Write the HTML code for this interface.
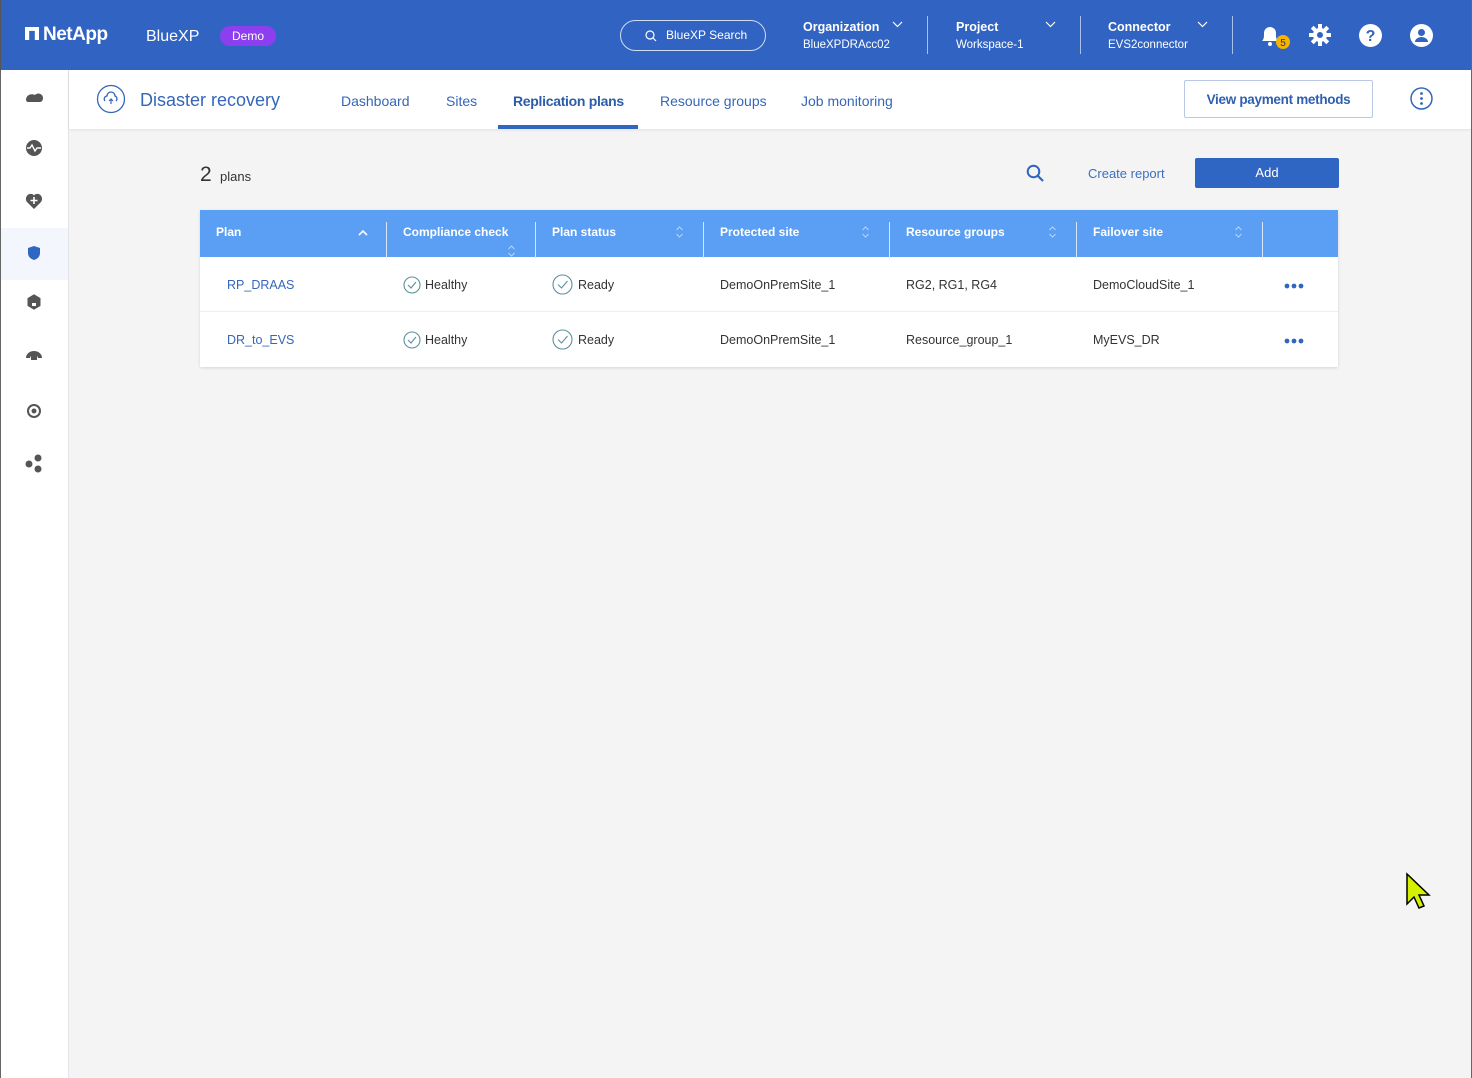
<!DOCTYPE html>
<html><head><meta charset="utf-8"><style>
*{box-sizing:border-box;margin:0;padding:0}
body{width:1472px;height:1078px;overflow:hidden;background:#f4f4f5;font-family:"Liberation Sans",sans-serif;position:relative;color:#333}
.a{position:absolute}
.top{left:0;top:0;width:1472px;height:70px;background:#3163c2;border-left:1px solid #555;border-right:1px solid #555}
.w{color:#fff}
.side{left:0;top:70px;width:69px;height:1008px;background:#fff;border-left:1px solid #666;border-right:1px solid #e4e4e8}
.sub{left:69px;top:70px;width:1403px;height:59px;background:#fff;box-shadow:0 1px 3px rgba(0,0,0,.08)}
.nav{top:93px;font-size:14px;color:#3566b9}
.th{top:210px;height:47px;background:#5a9ff4;left:200px;width:1138px}
.thc{top:225px;font-size:12px;font-weight:bold;color:#fff}
.sep{top:222px;width:1px;height:36px;background:#d6e6fb}
.td{font-size:12.5px;color:#333}
</style></head><body>
<div class="a top"></div>
<div class="a w" style="left:25px;top:24px;font-size:19px;font-weight:bold;letter-spacing:-0.5px"><span style="display:inline-block;width:14px;height:13px;background:#fff;margin-right:4px;vertical-align:0px;clip-path:polygon(0 0,100% 0,100% 100%,70% 100%,70% 30%,30% 30%,30% 100%,0 100%)"></span>NetApp</div>
<div class="a w" style="left:146px;top:28px;font-size:16px">BlueXP</div>
<div class="a" style="left:220px;top:26px;width:56px;height:20px;background:#8d3ff0;border-radius:10px;color:#fff;font-size:12px;text-align:center;line-height:20px">Demo</div>
<div class="a" style="left:620px;top:20px;width:146px;height:31px;border:1px solid #d0dcf2;border-radius:16px;color:#fff;font-size:12px;line-height:29px;padding-left:25px"><svg class="a" style="left:24px;top:9px" width="12" height="12" viewBox="0 0 12 12"><circle cx="5" cy="5" r="4" stroke="#fff" fill="none" stroke-width="1.2"/><path d="M8 8l3 3" stroke="#fff" stroke-width="1.2"/></svg><span style="margin-left:20px">BlueXP Search</span></div>
<div class="a w" style="left:803px;top:20px;font-size:12.5px;font-weight:bold">Organization</div>
<div class="a w" style="left:803px;top:39px;font-size:11.5px">BlueXPDRAcc02</div>
<svg class="a" style="left:892px;top:21px" width="11" height="7"><path d="M1 1l4.5 4.5L10 1" stroke="#fff" fill="none" stroke-width="1.2"/></svg>
<div class="a" style="left:927px;top:16px;width:1px;height:38px;background:#aac0ea"></div>
<div class="a w" style="left:956px;top:20px;font-size:12.5px;font-weight:bold">Project</div>
<div class="a w" style="left:956px;top:39px;font-size:11.5px">Workspace-1</div>
<svg class="a" style="left:1045px;top:21px" width="11" height="7"><path d="M1 1l4.5 4.5L10 1" stroke="#fff" fill="none" stroke-width="1.2"/></svg>
<div class="a" style="left:1080px;top:16px;width:1px;height:38px;background:#aac0ea"></div>
<div class="a w" style="left:1108px;top:20px;font-size:12.5px;font-weight:bold">Connector</div>
<div class="a w" style="left:1108px;top:39px;font-size:11.5px">EVS2connector</div>
<svg class="a" style="left:1197px;top:21px" width="11" height="7"><path d="M1 1l4.5 4.5L10 1" stroke="#fff" fill="none" stroke-width="1.2"/></svg>
<div class="a" style="left:1232px;top:16px;width:1px;height:38px;background:#aac0ea"></div>
<svg class="a" style="left:1259px;top:23px" width="36" height="28" viewBox="0 0 36 28"><path d="M3 18c2-2 2-4 2-8a6 6 0 0 1 12 0c0 4 0 6 2 8z" fill="#fff"/><circle cx="11" cy="21" r="2" fill="#fff"/><circle cx="24" cy="19" r="7" fill="#f4b400"/><text x="24" y="23" font-size="10" text-anchor="middle" fill="#333" font-family="Liberation Sans">5</text></svg>
<svg class="a" style="left:1309px;top:24px" width="22" height="22" viewBox="0 0 22 22"><g fill="#fff"><circle cx="11" cy="11" r="7"/><rect x="9" y="0" width="4" height="22"/><rect x="0" y="9" width="22" height="4"/><rect x="9" y="0" width="4" height="22" transform="rotate(45 11 11)"/><rect x="9" y="0" width="4" height="22" transform="rotate(-45 11 11)"/></g><circle cx="11" cy="11" r="3" fill="#3163c2"/></svg>
<svg class="a" style="left:1359px;top:24px" width="23" height="23"><circle cx="11.5" cy="11.5" r="11.5" fill="#fff"/><text x="11.5" y="17" font-size="16" font-weight="bold" text-anchor="middle" fill="#3163c2" font-family="Liberation Sans">?</text></svg>
<svg class="a" style="left:1410px;top:24px" width="23" height="23"><circle cx="11.5" cy="11.5" r="11.5" fill="#fff"/><circle cx="11.5" cy="8.5" r="3.5" fill="#3163c2"/><path d="M5 18a6.5 5 0 0 1 13 0z" fill="#3163c2"/></svg>

<div class="a side"></div>
<div class="a" style="left:1px;top:228px;width:67px;height:52px;background:#f3f6fc"></div>
<svg class="a" style="left:24px;top:85px" width="20" height="400" viewBox="0 0 20 400" fill="#555">
<path d="M2 15c0-5 5-7 9-5 3-3 8-1 8 3 0 2-1 4-3 4H4c-1 0-2-1-2-2z"/>
<circle cx="10" cy="63" r="8"/><path d="M3 63h3l2-3 3 6 2-3h4" stroke="#fff" fill="none" stroke-width="1.4"/>
<path d="M10 124l-7-7c-3-4 1-9 4-8 2 0 3 1 3 2 0-1 1-2 3-2 3-1 7 4 4 8z"/><path d="M10 112v7M6.5 115.5h7" stroke="#fff" stroke-width="1.6"/>
<path d="M4 163l6-2 6 2v5c0 4-3 6-6 7-3-1-6-3-6-7z" fill="#2f66c3"/>
<path d="M5 214l5-3 5 3v6l-5 3-5-3z" stroke="#555" stroke-width="3"/><path d="M8 221v-3h4v3z" fill="#fff"/>
<path d="M2 273a8 7 0 0 1 16 0h-4a4 3 0 0 0-8 0z"/><rect x="7" y="270" width="6" height="5"/>
<circle cx="10" cy="326" r="6" fill="none" stroke="#555" stroke-width="2"/><circle cx="10" cy="326" r="2.5"/>
<circle cx="14" cy="373" r="3.5"/><circle cx="5" cy="379" r="3.5"/><circle cx="14" cy="384" r="3.5"/>
</svg>

<div class="a sub"></div>
<svg class="a" style="left:96px;top:84px" width="30" height="30"><circle cx="15" cy="15" r="13.5" fill="none" stroke="#3566b9" stroke-width="1.3"/><path d="M9 17a3 3 0 0 1 2-5 4 4 0 0 1 8 0 3 3 0 0 1 1 5" fill="none" stroke="#3566b9" stroke-width="1.3"/><path d="M15 20v-5M13 17l2-2 2 2" fill="none" stroke="#3566b9" stroke-width="1.2"/></svg>
<div class="a" style="left:140px;top:90px;font-size:18px;color:#3566b9">Disaster recovery</div>
<div class="a nav" style="left:341px">Dashboard</div>
<div class="a nav" style="left:446px">Sites</div>
<div class="a nav" style="left:513px;font-weight:bold;color:#2c5ca8;letter-spacing:-0.3px">Replication plans</div>
<div class="a" style="left:498px;top:125px;width:140px;height:4px;background:#2f66c3"></div>
<div class="a nav" style="left:660px">Resource groups</div>
<div class="a nav" style="left:801px">Job monitoring</div>
<div class="a" style="left:1184px;top:80px;width:189px;height:38px;border:1px solid #b8c8e6;border-radius:2px;font-size:13.5px;color:#2f5fb0;text-align:center;line-height:37px;font-weight:bold;letter-spacing:-0.3px">View payment methods</div>
<svg class="a" style="left:1410px;top:87px" width="23" height="23"><circle cx="11.5" cy="11.5" r="10.5" fill="none" stroke="#2f66c3" stroke-width="1.5"/><circle cx="11.5" cy="6.5" r="1.4" fill="#2f66c3"/><circle cx="11.5" cy="11.5" r="1.4" fill="#2f66c3"/><circle cx="11.5" cy="16.5" r="1.4" fill="#2f66c3"/></svg>

<div class="a" style="left:200px;top:163px;font-size:21px;color:#333">2</div>
<div class="a" style="left:220px;top:169px;font-size:13px;color:#333">plans</div>
<svg class="a" style="left:1026px;top:164px" width="19" height="19"><circle cx="7.5" cy="7.5" r="5.8" fill="none" stroke="#2f66c3" stroke-width="2"/><path d="M12 12l5 5" stroke="#2f66c3" stroke-width="2.2"/></svg>
<div class="a" style="left:1088px;top:166px;font-size:13px;color:#3d6fbd">Create report</div>
<div class="a" style="left:1195px;top:158px;width:144px;height:30px;background:#2f66c3;border-radius:2px;color:#fff;font-size:13px;text-align:center;line-height:30px">Add</div>

<div class="a" style="left:200px;top:210px;width:1138px;height:157px;background:#fff;box-shadow:0 1px 3px rgba(0,0,0,.12)"></div>
<div class="a th"></div>
<div class="a thc" style="left:216px">Plan</div>
<svg class="a" style="left:358px;top:229px" width="10" height="7"><path d="M1 6l4-4 4 4" stroke="#fff" fill="none" stroke-width="1.6"/></svg>
<div class="a sep" style="left:386px"></div>
<div class="a thc" style="left:403px">Compliance check</div>
<svg class="a" style="left:507px;top:244px" width="9" height="14"><path d="M1.5 5l3-3 3 3M1.5 9l3 3 3-3" stroke="#b9d5fb" fill="none" stroke-width="1"/></svg>
<div class="a sep" style="left:535px"></div>
<div class="a thc" style="left:552px">Plan status</div>
<div class="a sep" style="left:703px"></div>
<div class="a thc" style="left:720px">Protected site</div>
<div class="a sep" style="left:889px"></div>
<div class="a thc" style="left:906px">Resource groups</div>
<div class="a sep" style="left:1076px"></div>
<div class="a thc" style="left:1093px">Failover site</div>
<div class="a sep" style="left:1262px"></div>
<svg class="a" style="left:675px;top:225px" width="9" height="14"><path d="M1.5 5l3-3 3 3M1.5 9l3 3 3-3" stroke="#b9d5fb" fill="none" stroke-width="1"/></svg>
<svg class="a" style="left:861px;top:225px" width="9" height="14"><path d="M1.5 5l3-3 3 3M1.5 9l3 3 3-3" stroke="#b9d5fb" fill="none" stroke-width="1"/></svg>
<svg class="a" style="left:1048px;top:225px" width="9" height="14"><path d="M1.5 5l3-3 3 3M1.5 9l3 3 3-3" stroke="#b9d5fb" fill="none" stroke-width="1"/></svg>
<svg class="a" style="left:1234px;top:225px" width="9" height="14"><path d="M1.5 5l3-3 3 3M1.5 9l3 3 3-3" stroke="#b9d5fb" fill="none" stroke-width="1"/></svg>
<div class="a" style="left:200px;top:311px;width:1138px;height:1px;background:#eee"></div>

<div class="a td" style="left:227px;top:278px;color:#3566b9">RP_DRAAS</div>
<svg class="a" style="left:403px;top:276px" width="18" height="18"><circle cx="9" cy="9" r="8" fill="none" stroke="#5b8f9e" stroke-width="1.1"/><path d="M5 9l3 3 5-6" fill="none" stroke="#5b8f9e" stroke-width="1.1"/></svg>
<div class="a td" style="left:425px;top:278px">Healthy</div>
<svg class="a" style="left:552px;top:274px" width="21" height="21"><circle cx="10.5" cy="10.5" r="9.5" fill="none" stroke="#5b8f9e" stroke-width="1.1"/><path d="M6 10.5l3.5 3.5 6-7" fill="none" stroke="#5b8f9e" stroke-width="1.1"/></svg>
<div class="a td" style="left:578px;top:278px">Ready</div>
<div class="a td" style="left:720px;top:278px">DemoOnPremSite_1</div>
<div class="a td" style="left:906px;top:278px">RG2, RG1, RG4</div>
<div class="a td" style="left:1093px;top:278px">DemoCloudSite_1</div>
<svg class="a" style="left:1284px;top:283px" width="20" height="6"><circle cx="3" cy="3" r="2.4" fill="#2f66c3"/><circle cx="10" cy="3" r="2.4" fill="#2f66c3"/><circle cx="17" cy="3" r="2.4" fill="#2f66c3"/></svg>

<div class="a td" style="left:227px;top:333px;color:#3566b9">DR_to_EVS</div>
<svg class="a" style="left:403px;top:331px" width="18" height="18"><circle cx="9" cy="9" r="8" fill="none" stroke="#5b8f9e" stroke-width="1.1"/><path d="M5 9l3 3 5-6" fill="none" stroke="#5b8f9e" stroke-width="1.1"/></svg>
<div class="a td" style="left:425px;top:333px">Healthy</div>
<svg class="a" style="left:552px;top:329px" width="21" height="21"><circle cx="10.5" cy="10.5" r="9.5" fill="none" stroke="#5b8f9e" stroke-width="1.1"/><path d="M6 10.5l3.5 3.5 6-7" fill="none" stroke="#5b8f9e" stroke-width="1.1"/></svg>
<div class="a td" style="left:578px;top:333px">Ready</div>
<div class="a td" style="left:720px;top:333px">DemoOnPremSite_1</div>
<div class="a td" style="left:906px;top:333px">Resource_group_1</div>
<div class="a td" style="left:1093px;top:333px">MyEVS_DR</div>
<svg class="a" style="left:1284px;top:338px" width="20" height="6"><circle cx="3" cy="3" r="2.4" fill="#2f66c3"/><circle cx="10" cy="3" r="2.4" fill="#2f66c3"/><circle cx="17" cy="3" r="2.4" fill="#2f66c3"/></svg>

<svg class="a" style="left:1405px;top:872px" width="28" height="38"><path d="M2 2v30l7-7 5 11 5-2-5-11h10z" fill="#d4f000" stroke="#000" stroke-width="1.5"/></svg>
<div class="a" style="left:1471px;top:0;width:1px;height:1078px;background:#666"></div>
</body></html>
